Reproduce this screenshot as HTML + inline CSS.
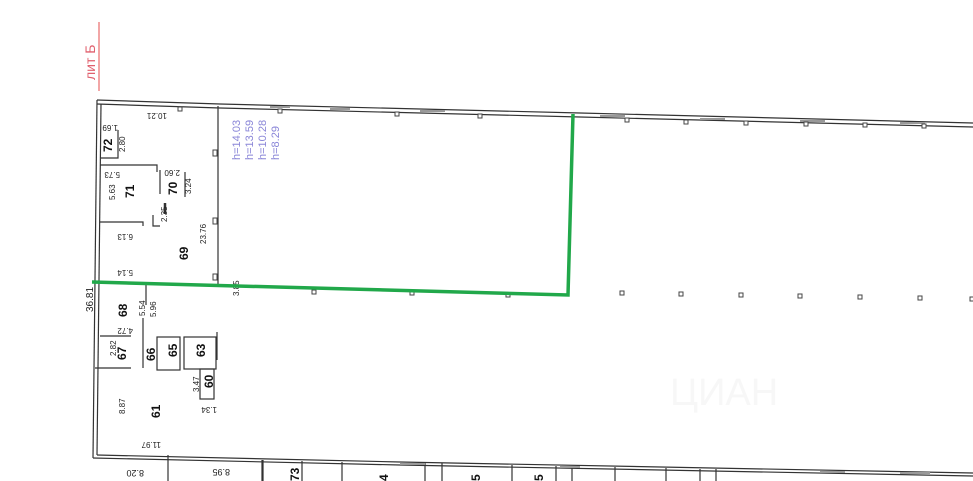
<!DOCTYPE html>
<html><head><meta charset="utf-8"><style>
html,body{margin:0;padding:0;background:#fff;width:973px;height:481px;overflow:hidden}
svg{display:block}
text{font-family:"Liberation Sans","DejaVu Sans",sans-serif}
</style></head><body>
<svg width="973" height="481" viewBox="0 0 973 481" xmlns="http://www.w3.org/2000/svg">
<g transform="translate(95,80) rotate(-90)"><text x="0" y="0" font-size="14" fill="#e0606e">лит Б</text></g>
<line x1="99" y1="22" x2="99" y2="91" stroke="#e88" stroke-width="1.5"/>
<g stroke="#333" fill="none" stroke-width="1.2">
<polyline points="97,100 220,104 580,113 973,123"/>
<polyline points="97,104 220,108 580,117 973,127"/>
<polyline points="97,100 93,458"/>
<polyline points="101,104 97,455"/>
<polyline points="93,458 400,465 973,476"/>
<polyline points="97,455 400,462 973,473"/>
<line x1="218" y1="106" x2="218" y2="285"/>
<polyline points="101,158 118,158 118,130"/>
<polyline points="100,165 157,165 157,172"/>
<polyline points="100,222 143,222 143,226"/>
<polyline points="153,215 153,226 160,226"/>
<line x1="160" y1="170" x2="160" y2="194"/>
<line x1="185" y1="172" x2="185" y2="197"/>
<line x1="165" y1="203" x2="165" y2="214" stroke-width="2.5"/>
<line x1="146" y1="285" x2="146" y2="305"/>
<line x1="143" y1="318" x2="143" y2="368"/>
<polyline points="100,336 131,336"/>
<polyline points="95,368 131,368"/>
<rect x="157" y="337" width="23" height="33"/>
<rect x="184" y="337" width="32" height="32"/>
<line x1="217" y1="332" x2="217" y2="360"/>
<rect x="200" y="369" width="14" height="30"/>
<line x1="168" y1="455" x2="168" y2="481"/>
<line x1="262" y1="460" x2="262" y2="481"/>
<line x1="263" y1="460" x2="263" y2="481"/>
<line x1="302" y1="461" x2="302" y2="481"/>
<line x1="342" y1="462" x2="342" y2="481"/>
<line x1="425" y1="463" x2="425" y2="481"/>
<line x1="442" y1="463" x2="442" y2="481"/>
<line x1="512" y1="465" x2="512" y2="481"/>
<line x1="556" y1="466" x2="556" y2="481"/>
<line x1="572" y1="466" x2="572" y2="481"/>
<line x1="615" y1="467" x2="615" y2="481"/>
<line x1="666" y1="468" x2="666" y2="481"/>
<line x1="700" y1="469" x2="700" y2="481"/>
<line x1="716" y1="469" x2="716" y2="481"/>
</g>
<g fill="#999">
<rect x="270" y="106" width="20" height="2"/><rect x="330" y="108" width="20" height="2"/>
<rect x="420" y="110" width="25" height="2"/><rect x="600" y="115" width="25" height="2"/>
<rect x="700" y="118" width="25" height="2"/><rect x="800" y="120" width="25" height="2"/>
<rect x="900" y="122" width="25" height="2"/>
<rect x="400" y="463" width="25" height="2"/><rect x="560" y="466" width="20" height="2"/>
<rect x="820" y="471" width="25" height="2"/><rect x="900" y="472" width="30" height="2"/>
</g>
<g fill="#fff" stroke="#444" stroke-width="1">
<rect x="620" y="291" width="4" height="4"/><rect x="679" y="292" width="4" height="4"/>
<rect x="739" y="293" width="4" height="4"/><rect x="798" y="294" width="4" height="4"/>
<rect x="858" y="295" width="4" height="4"/><rect x="918" y="296" width="4" height="4"/>
<rect x="970" y="297" width="4" height="4"/>
<rect x="178" y="107" width="4" height="4"/><rect x="278" y="109" width="4" height="4"/>
<rect x="395" y="112" width="4" height="4"/><rect x="478" y="114" width="4" height="4"/>
<rect x="625" y="118" width="4" height="4"/><rect x="684" y="120" width="4" height="4"/>
<rect x="744" y="121" width="4" height="4"/><rect x="804" y="122" width="4" height="4"/>
<rect x="863" y="123" width="4" height="4"/><rect x="922" y="124" width="4" height="4"/>
<rect x="213" y="150" width="4" height="6"/><rect x="213" y="218" width="4" height="6"/>
<rect x="213" y="274" width="4" height="6"/>
<rect x="312" y="290" width="4" height="4"/><rect x="410" y="291" width="4" height="4"/>
<rect x="506" y="293" width="4" height="4"/>
</g>
<g fill="#222" font-size="8">
<g transform="translate(167,113) rotate(180)"><text>10.21</text></g>
<g transform="translate(118,125) rotate(180)"><text>1.69</text></g>
<g transform="translate(120,172) rotate(180)"><text>5.73</text></g>
<g transform="translate(180,170) rotate(180)"><text>2.60</text></g>
<g transform="translate(133,234) rotate(180)"><text>6.13</text></g>
<g transform="translate(133,270) rotate(180)"><text>5.14</text></g>
<g transform="translate(133,328) rotate(180)"><text>4.72</text></g>
<g transform="translate(161,442) rotate(180)"><text>11.97</text></g>
<g transform="translate(144,470) rotate(180)"><text font-size="9">8.20</text></g>
<g transform="translate(230,469) rotate(180)"><text font-size="9">8.95</text></g>
<g transform="translate(217,407) rotate(180)"><text>1.34</text></g>
<g transform="translate(115,200) rotate(-90)"><text>5.63</text></g>
<g transform="translate(125,152) rotate(-90)"><text>2.80</text></g>
<g transform="translate(167,222) rotate(-90)"><text>2.35</text></g>
<g transform="translate(191,194) rotate(-90)"><text>3.24</text></g>
<g transform="translate(206,244) rotate(-90)"><text>23.76</text></g>
<g transform="translate(239,296) rotate(-90)"><text>3.85</text></g>
<g transform="translate(93,312) rotate(-90)"><text font-size="10">36.81</text></g>
<g transform="translate(145,316) rotate(-90)"><text>5.54</text></g>
<g transform="translate(156,317) rotate(-90)"><text>5.96</text></g>
<g transform="translate(116,356) rotate(-90)"><text>2.82</text></g>
<g transform="translate(125,414) rotate(-90)"><text>8.87</text></g>
<g transform="translate(199,392) rotate(-90)"><text>3.47</text></g>
</g>
<g fill="#111" font-size="12" font-weight="bold">
<g transform="translate(112,152) rotate(-90)"><text>72</text></g>
<g transform="translate(134,198) rotate(-90)"><text>71</text></g>
<g transform="translate(177,195) rotate(-90)"><text>70</text></g>
<g transform="translate(188,260) rotate(-90)"><text>69</text></g>
<g transform="translate(127,317) rotate(-90)"><text>68</text></g>
<g transform="translate(126,360) rotate(-90)"><text>67</text></g>
<g transform="translate(155,361) rotate(-90)"><text>66</text></g>
<g transform="translate(177,357) rotate(-90)"><text>65</text></g>
<g transform="translate(205,357) rotate(-90)"><text>63</text></g>
<g transform="translate(213,388) rotate(-90)"><text>60</text></g>
<g transform="translate(160,418) rotate(-90)"><text>61</text></g>
<g transform="translate(299,481) rotate(-90)"><text>73</text></g>
<g transform="translate(388,481) rotate(-90)"><text>4</text></g>
<g transform="translate(480,481) rotate(-90)"><text>5</text></g>
<g transform="translate(543,481) rotate(-90)"><text>5</text></g>
</g>
<g fill="#8a86d8" font-size="11">
<g transform="translate(240,160) rotate(-90)"><text>h=14.03</text></g>
<g transform="translate(253,160) rotate(-90)"><text>h=13.59</text></g>
<g transform="translate(266,160) rotate(-90)"><text>h=10.28</text></g>
<g transform="translate(279,160) rotate(-90)"><text>h=8.29</text></g>
</g>
<text x="670" y="405" font-size="38" fill="#f7f7f7">ЦИАН</text>
<polyline points="92,282 568,295 573,114" fill="none" stroke="#21a84a" stroke-width="3.5"/>
</svg>
</body></html>
